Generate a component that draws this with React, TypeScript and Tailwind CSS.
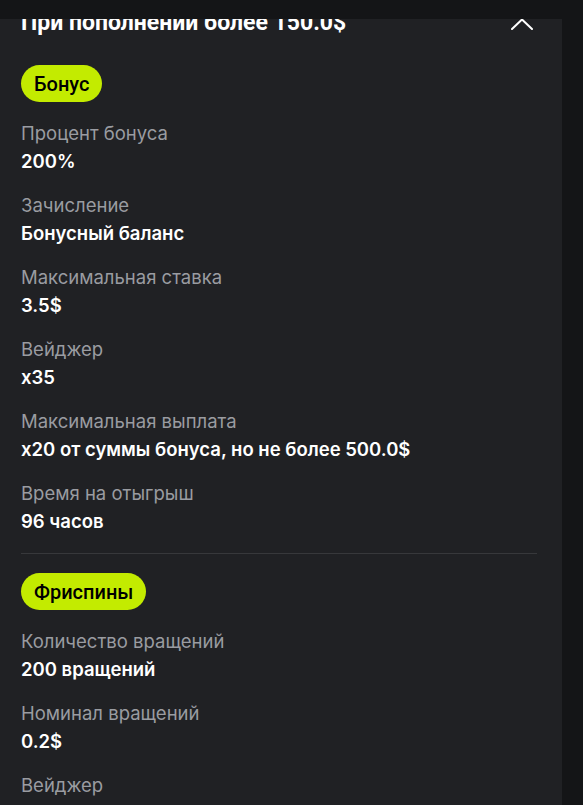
import React from 'react';

interface Row {
    label: string;
    value: string;
}

const bonusRows: Row[] = [
    { label: 'Процент бонуса', value: '200%' },
    { label: 'Зачисление', value: 'Бонусный баланс' },
    { label: 'Максимальная ставка', value: '3.5$' },
    { label: 'Вейджер', value: 'x35' },
    { label: 'Максимальная выплата', value: 'x20 от суммы бонуса, но не более 500.0$' },
    { label: 'Время на отыгрыш', value: '96 часов' },
];

const freespinRows: Row[] = [
    { label: 'Количество вращений', value: '200 вращений' },
    { label: 'Номинал вращений', value: '0.2$' },
    { label: 'Вейджер', value: 'x35' },
    { label: 'Время на отыгрыш', value: '96 часов' },
];

const Badge: React.FC<{ children: React.ReactNode }> = ({ children }) => (
    <span className="inline-flex h-[37px] items-center rounded-full bg-[#c3eb00] px-[13px] text-[20px] font-medium text-black font-['Roboto',sans-serif]">
        {children}
    </span>
);

const Section: React.FC<{ title: string; rows: Row[] }> = ({ title, rows }) => (
    <div className="flex flex-col items-start">
        <Badge>{title}</Badge>
        <div className="mt-[19px] flex flex-col gap-5">
            {rows.map((r, i) => (
                <div key={i} className="flex flex-col gap-1 text-[18.5px] leading-6">
                    <span className="text-[#9a9ca1]">{r.label}</span>
                    <span className="font-semibold text-white">{r.value}</span>
                </div>
            ))}
        </div>
    </div>
);

export default function App() {
    return (
        <div className="relative h-[805px] w-[583px] overflow-hidden bg-[#141517] font-['Inter',sans-serif]">
            {/* top bar over the scrolled content */}
            <div className="absolute inset-x-0 top-0 z-10 h-[19px] bg-[#141517]" />

            <div className="h-full w-[562px] bg-[#202124] pl-[21px] pr-[25px]">
                {/* Header */}
                <div className="flex h-[36px] items-center justify-between pt-[10px]">
                    <h2 className="text-[23px] font-bold leading-7 text-white font-['Roboto',sans-serif]">
                        При пополнении более 150.0$
                    </h2>
                    <svg width="22" height="12" viewBox="0 0 22 12" fill="none" className="mr-[4px] mt-[2px]">
                        <path d="M1 11 L11 1.5 L21 11" stroke="white" strokeWidth="2" strokeLinecap="round" strokeLinejoin="round" />
                    </svg>
                </div>

                <div className="mt-[29px] pb-5">
                    <Section title="Бонус" rows={bonusRows} />
                </div>

                <div className="border-t border-[#37383b] pt-[19px]">
                    <Section title="Фриспины" rows={freespinRows} />
                </div>
            </div>
        </div>
    );
}
